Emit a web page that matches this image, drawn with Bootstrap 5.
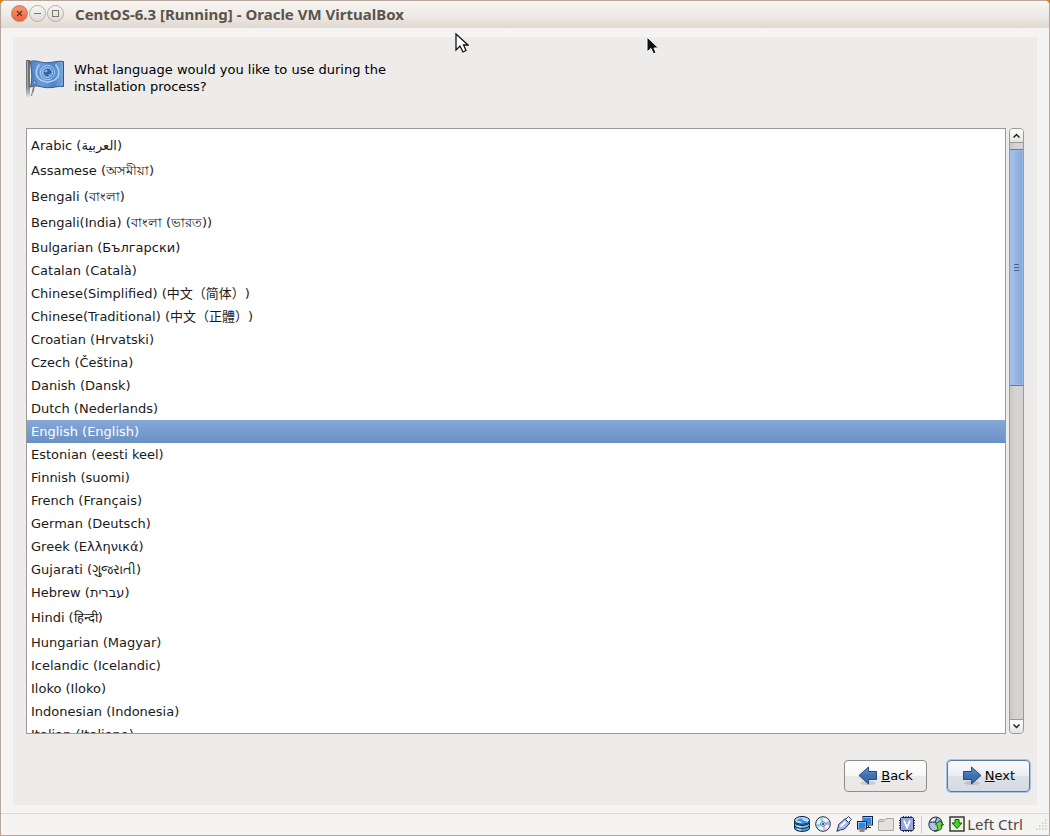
<!DOCTYPE html>
<html lang="en">
<head>
<meta charset="utf-8">
<meta name="viewport" content="width=device-width, initial-scale=1">
<title>CentOS-6.3 [Running] - Oracle VM VirtualBox</title>
<link href="https://cdn.jsdelivr.net/npm/bootstrap@5.3.0/dist/css/bootstrap.min.css" rel="stylesheet">
<style>
  body { background: #dd7d12; font-family: "DejaVu Sans", "Noto Sans CJK SC", sans-serif; font-size: 13px; line-height: 17px; color: #000; }
  .vm-window { background: #f5f4f2; border: 1px solid #b5a79b; border-radius: 5px 5px 0 0; overflow: hidden; }
  .vm-title { height: 27px; padding: 0 10px 2px; gap: 1px; background: linear-gradient(#f8f6f3, #efebe6 50%, #dfd8cf); }
  .vm-title h1 { font: bold 15px/20px "Noto Sans", sans-serif; color: #5a544c; margin: 0 0 0 10px; white-space: nowrap; }
  .win-btn { width: 17px; height: 17px; border: 1px solid #b5afa8; background: linear-gradient(#f9f8f6, #dedad5); }
  .win-btn.win-close { border-color: #c67a5e; background: linear-gradient(#f79470, #ee6440); }
  .guest { margin: 9px 12px 8px; padding: 23px 13px 13px; background: #edeceb; min-height: 0; }
  .ask { max-width: 330px; padding-top: 1px; }
  .ask-row { gap: 10px; padding-bottom: 30px; }
  .lang-area { gap: 3px; min-height: 0; }
  .lang-box { background: #fff; border: 1px solid #9b9a98; overflow: hidden; min-height: 0; }
  .lang-box .list-group-item { height: 23px; margin: 0; padding: 0 4px; border: 0; border-radius: 0; background: none; color: #1a1a1a; line-height: 24px; white-space: nowrap; flex: none; }
  .lang-box .list-group-item.mid { height: 24px; }
  .lang-box .list-group-item.tall { height: 26px; line-height: 26px; }
  .lang-box .list-group .list-group-item.active { margin: 0; background: linear-gradient(#86a8d9, #6990c4); color: #fff; }
  .cjk { text-spacing-trim: space-all; }
  .bar { width: 15px; background: linear-gradient(90deg, #c8c7c5, #d5d4d2 40%); border: 1px solid #9b9a98; border-radius: 4px; overflow: hidden; }
  .bar-btn { height: 14px; border: 0; background: linear-gradient(#fff, #e4e3e1); flex: none; }
  .bar-btn.up { border-bottom: 1px solid #9b9a98; }
  .bar-btn.down { border-top: 1px solid #9b9a98; }
  .bar-track { padding: 6px 0; min-height: 0; }
  .bar-thumb { height: 42%; margin: 0 -1px; border: 1px solid #5f7fb2; background: linear-gradient(90deg, #a8c5ea, #82a6d8); box-shadow: inset 0 0 0 1px #9dbce6; }
  .grip { width: 5px; height: 7px; background: linear-gradient(#47659a 1px, transparent 1px) 0 0 / 5px 3px; }
  .actions { gap: 20px; padding-top: 26px; margin-right: -6px; }
  .act { width: 83px; height: 32px; gap: 3px; padding: 0 0 2px; border: 1px solid #8e8c88; border-radius: 4px; background: linear-gradient(#fff, #f6f6f5 50%, #ebeae9 51%, #e9e8e7); color: #000; font-size: 13px; line-height: 17px; }
  .act-default { border-color: #5578aa; background: linear-gradient(#fbfcfe, #e9edf3 50%, #dde1e7 51%, #d5dae0); box-shadow: 0 0 0 1px #a9c3e6; }
  .status { height: 22px; border-top: 1px solid #dcd8d3; padding: 0 2px 1px 8px; gap: 5px; }
  .status-sep { width: 1px; height: 17px; background: #cfcac4; margin: 0 1px; }
  .host-box { gap: 2px; margin-right: 8px; }
  .host-key { font: 15px/20px "Noto Sans", sans-serif; color: #4c4843; white-space: nowrap; }
  .pointer { pointer-events: none; }
  .pointer-host { left: 454px; top: 32px; }
  .pointer-guest { left: 645px; top: 35px; }
</style>
</head>
<body>
<main class="vm-window vh-100 d-flex flex-column position-relative">
  <header class="vm-title d-flex align-items-center flex-shrink-0">
    <button type="button" class="win-btn win-close rounded-circle p-0 d-flex align-items-center justify-content-center" aria-label="Close"><svg width="7" height="7"><path d="M1 1l5 5M6 1l-5 5" stroke="#6b2f1c" stroke-width="1.2"/></svg></button>
    <button type="button" class="win-btn rounded-circle p-0 d-flex align-items-center justify-content-center" aria-label="Minimize"><svg width="7" height="7"><path d="M0 3.5h7" stroke="#7b766f"/></svg></button>
    <button type="button" class="win-btn rounded-circle p-0 d-flex align-items-center justify-content-center" aria-label="Maximize"><svg width="7" height="7"><rect x=".5" y=".5" width="6" height="6" fill="none" stroke="#7b766f"/></svg></button>
    <h1>CentOS-6.3 [Running] - Oracle VM VirtualBox</h1>
  </header>

  <section class="guest flex-grow-1 d-flex flex-column">
    <div class="ask-row d-flex">
      <svg class="flex-shrink-0" width="38" height="38" viewBox="0 0 38 38" aria-hidden="true">
        <defs>
          <linearGradient id="pole" x2="0" y2="1"><stop stop-color="#696c68"/><stop offset=".7" stop-color="#777a76"/><stop offset="1" stop-color="#777a76" stop-opacity="0"/></linearGradient>
          <linearGradient id="cloth"><stop stop-color="#4d84c4"/><stop offset=".35" stop-color="#6a9dd6"/><stop offset=".7" stop-color="#4f86c6"/><stop offset="1" stop-color="#79a9dd"/></linearGradient>
        </defs>
        <path d="M4 1.500c6-2 11 1.500 17 1.300S32 .5 37.500 1.500v25c-6-.8-9 1.500-16 1.200S12 24.500 4.500 27c2-8 1.500-17-.5-25.500z" fill="url(#cloth)" stroke="#2d5794"/>
        <g fill="none" stroke="#b4d0ef"><circle cx="21.500" cy="12.500" r="7.200" stroke-width=".9"/><circle cx="21.500" cy="12.500" r="5" stroke-width=".9"/><path d="M13.500 4.500c-5 6-4 12.500 1 15.500 3 2 5 1 7.500 2.500M29.500 4.500c5 6 4 12.500-1 15.500-3 2-5 1-7.500 2.500" stroke-width="1.500"/></g>
        <circle cx="21.500" cy="12.500" r="3.500" fill="#2f64a5"/>
        <path d="M18 11l3-1.500.5 2-2 1zM22.500 14.500l2-1v2l-2 .5z" fill="#8fb6e2"/>
        <rect width="4" height="38" fill="url(#pole)"/><path d="M1.500 1v30" stroke="#a3a59f"/>
        <circle cx="8.500" cy="22.500" r="1.500" fill="#c8d7e8" stroke="#33598e"/><path d="M8 25L5.500 36M9 24l-2 8" stroke="#777" fill="none"/>
      </svg>
      <div id="ask" class="ask">What language would you like to use during the installation process?</div>
    </div>

    <div class="lang-area d-flex flex-grow-1">
      <div class="lang-box flex-grow-1" id="langBox">
        <ul class="list-group rounded-0" role="listbox" aria-labelledby="ask">
          <li class="list-group-item" role="option">Afrikaans (Afrikaans)</li>
          <li class="list-group-item mid" role="option">Arabic (العربية)</li>
          <li class="list-group-item tall" role="option">Assamese (অসমীয়া)</li>
          <li class="list-group-item tall" role="option">Bengali (বাংলা)</li>
          <li class="list-group-item tall" role="option">Bengali(India) (বাংলা (ভারত))</li>
          <li class="list-group-item" role="option">Bulgarian (Български)</li>
          <li class="list-group-item" role="option">Catalan (Català)</li>
          <li class="list-group-item" role="option">Chinese(Simplified) (<span class="cjk" lang="zh-CN">中文（简体）</span>)</li>
          <li class="list-group-item" role="option">Chinese(Traditional) (<span class="cjk" lang="zh-TW">中文（正體）</span>)</li>
          <li class="list-group-item" role="option">Croatian (Hrvatski)</li>
          <li class="list-group-item" role="option">Czech (Čeština)</li>
          <li class="list-group-item" role="option">Danish (Dansk)</li>
          <li class="list-group-item" role="option">Dutch (Nederlands)</li>
          <li class="list-group-item active" role="option" aria-selected="true">English (English)</li>
          <li class="list-group-item" role="option">Estonian (eesti keel)</li>
          <li class="list-group-item" role="option">Finnish (suomi)</li>
          <li class="list-group-item" role="option">French (Français)</li>
          <li class="list-group-item" role="option">German (Deutsch)</li>
          <li class="list-group-item" role="option">Greek (Ελληνικά)</li>
          <li class="list-group-item" role="option">Gujarati (ગુજરાતી)</li>
          <li class="list-group-item mid" role="option">Hebrew (עברית)</li>
          <li class="list-group-item tall" role="option">Hindi (हिन्दी)</li>
          <li class="list-group-item" role="option">Hungarian (Magyar)</li>
          <li class="list-group-item" role="option">Icelandic (Icelandic)</li>
          <li class="list-group-item" role="option">Iloko (Iloko)</li>
          <li class="list-group-item" role="option">Indonesian (Indonesia)</li>
          <li class="list-group-item" role="option">Italian (Italiano)</li>
        </ul>
      </div>
      <div class="bar d-flex flex-column flex-shrink-0">
        <button type="button" class="bar-btn up p-0 d-flex align-items-center justify-content-center" aria-label="Scroll up"><svg width="7" height="5"><path d="M.5 4.500l3-3 3 3" fill="none" stroke="#222" stroke-width="1.500"/></svg></button>
        <div class="bar-track flex-grow-1"><div class="bar-thumb d-flex align-items-center justify-content-center"><span class="grip"></span></div></div>
        <button type="button" class="bar-btn down p-0 d-flex align-items-center justify-content-center" aria-label="Scroll down"><svg width="7" height="5"><path d="M.5 .5l3 3 3-3" fill="none" stroke="#222" stroke-width="1.500"/></svg></button>
      </div>
    </div>

    <div class="actions d-flex justify-content-end">
      <button type="button" class="btn act d-flex align-items-center justify-content-center"><svg width="20" height="20" viewBox="0 0 20 20"><defs><linearGradient id="arrow" x2="0" y2="1"><stop stop-color="#6d9cd0"/><stop offset=".5" stop-color="#3f71ae"/><stop offset="1" stop-color="#3568a8"/></linearGradient></defs><ellipse cx="10" cy="18" rx="8" ry="2" fill="#000" opacity=".12"/><path d="M1 10.500l9.500-8.500v4.500h8v8h-8v4.500z" fill="url(#arrow)" stroke="#204a87"/></svg><span><u>B</u>ack</span></button>
      <button type="button" class="btn act act-default d-flex align-items-center justify-content-center"><svg width="20" height="20" viewBox="0 0 20 20"><ellipse cx="10" cy="18" rx="8" ry="2" fill="#000" opacity=".12"/><path d="M19 10.500l-9.500-8.500v4.500h-8v8h8v4.500z" fill="url(#arrow)" stroke="#204a87"/></svg><span><u>N</u>ext</span></button>
    </div>
  </section>

  <footer class="status d-flex align-items-center justify-content-end flex-shrink-0">
    <svg width="16" height="16" aria-label="Hard disks"><g stroke="#0c2038" fill="#49a0e6"><path d="M.5 10v2c0 4.500 15 4.500 15 0v-2z"/><path d="M.5 7v2c0 4.500 15 4.500 15 0V7z" fill="#7cc0f4"/><path d="M.5 4.500v1.500c0 4.500 15 4.500 15 0V4.500z"/><ellipse cx="8" cy="4.300" rx="7.500" ry="3.800" fill="#aedcfb"/></g><path d="M2.500 4.500c2-2 4-2 5.500-2l1 2 4 1c-1 2-4 2-5 2l-1-2z" fill="#3d8fe0"/><path d="M3 13l4 1M3 10l4 1" stroke="#e6f5ff" stroke-width="1.200"/></svg>
    <svg width="16" height="16" aria-label="Optical disks"><circle cx="8" cy="8" r="7.300" fill="#f0f3fc" stroke="#17284b"/><path d="M8 8L4 2.500 8 1.500z" fill="#9be0b8"/><path d="M8 8l6-3 .5 4z" fill="#a1a5f0"/><path d="M8 8L1.500 8l1 4z" fill="#7ad5f5"/><path d="M8 8l4 5.500-4 1z" fill="#f1b7dc"/><circle cx="8" cy="8" r="2.300" fill="#fff" stroke="#4175bd"/><circle cx="8" cy="8" r="1" fill="#17284b"/></svg>
    <svg width="16" height="16" aria-label="USB"><path d="M.8 15.300l1-3 1-4 6.500-5.800 4.500 4.500-5.300 6-4.200 1z" fill="#a9bce8" stroke="#26355c"/><path d="M9.500 3.500l3-3 3 3-3 3z" fill="#f3f6fd" stroke="#26355c"/><path d="M4.500 10.500l5-4.500" stroke="#fff" stroke-width="1.700"/></svg>
    <svg width="16" height="16" aria-label="Network"><path d="M2.500 15h5M11.500 9.500V12" stroke="#222"/><rect x="6" y=".5" width="9.500" height="8.500" fill="#e8f2fc" stroke="#16233f"/><rect x="7" y="1.500" width="7.500" height="6.500" fill="#2388e8"/><path d="M10 11.500h4" stroke="#222"/><rect x=".5" y="5.500" width="9" height="7.500" fill="#e8f2fc" stroke="#16233f"/><rect x="1.500" y="6.500" width="7" height="5.500" fill="#2388e8"/></svg>
    <svg width="16" height="16" aria-label="Shared folders"><path d="M.5 14V4.500l1-1H6" fill="#d6d6d4" stroke="#a8a8a6"/><path d="M.5 14.500V5.500h5.500l2-3h7.500v12z" fill="#e2e1e0" stroke="#a8a8a6"/></svg>
    <svg width="16" height="16" aria-label="Virtualization"><path d="M4.500 0v16M7 0v16M9.500 0v16M12 0v16M0 4.500h16M0 7h16M0 9.500h16M0 12h16" stroke="#1c2550"/><rect x="1.500" y="1.500" width="13" height="13" rx="1" fill="#98a6da" stroke="#1c2550"/><path d="M5 4.500l3 7 3-7" fill="none" stroke="#fff" stroke-width="1.800"/></svg>
    <span class="status-sep"></span>
    <svg width="16" height="16" aria-label="Mouse integration"><ellipse cx="7.500" cy="8" rx="6.500" ry="7" fill="#b5c1e4" stroke="#26304f" transform="rotate(25 7.500 8)"/><path d="M2 6.500c3-1 6 0 9 2M9 1.500L7 7" stroke="#26304f" fill="none"/><path d="M4 5c1-2 2-2 3-2" stroke="#fff" stroke-width="1.500" fill="none"/><path d="M6 15c5-.5 4-4 2.500-6L7.500 8 12 4.500 15.500 9H13c2 3 0 6-7 6z" fill="#62d53a" stroke="#15530d"/></svg>
    <div class="host-box d-flex align-items-center">
      <svg width="16" height="16" aria-label="Keyboard capture"><rect x="1" y="1" width="14" height="14" fill="#eef1e0" stroke="#343d3a" stroke-width="1.500"/><path d="M6 3.500h4V7h3L8 12.500 3 7h3z" fill="#45d62d" stroke="#105d0c"/></svg>
      <span class="host-key">Left Ctrl</span>
    </div>
    <svg width="11" height="11" aria-hidden="true"><path d="M9 1h2M6 4h5M3 7h8M0 10h11" stroke="#c9c5c0" stroke-width="1.500" stroke-dasharray="1.500 1.500"/></svg>
  </footer>

  <svg class="pointer pointer-host position-absolute" width="14" height="21" aria-hidden="true"><path d="M1 1v16l4-4 3 6 3-1.500-2.500-5.500H13z" fill="#fff" stroke="#111" stroke-width="1.300"/></svg>
  <svg class="pointer pointer-guest position-absolute" width="14" height="20" aria-hidden="true"><path d="M1 1v15l4-3.500L7.500 18l2.500-1.500-2-4.500h4.500z" fill="#111" stroke="#fff"/></svg>
</main>
<script src="https://cdn.jsdelivr.net/npm/bootstrap@5.3.0/dist/js/bootstrap.bundle.min.js"></script>
<script>
  // Open the list slightly scrolled, with the chosen language in the middle.
  document.getElementById('langBox').scrollTop = 18;
</script>
</body>
</html>
